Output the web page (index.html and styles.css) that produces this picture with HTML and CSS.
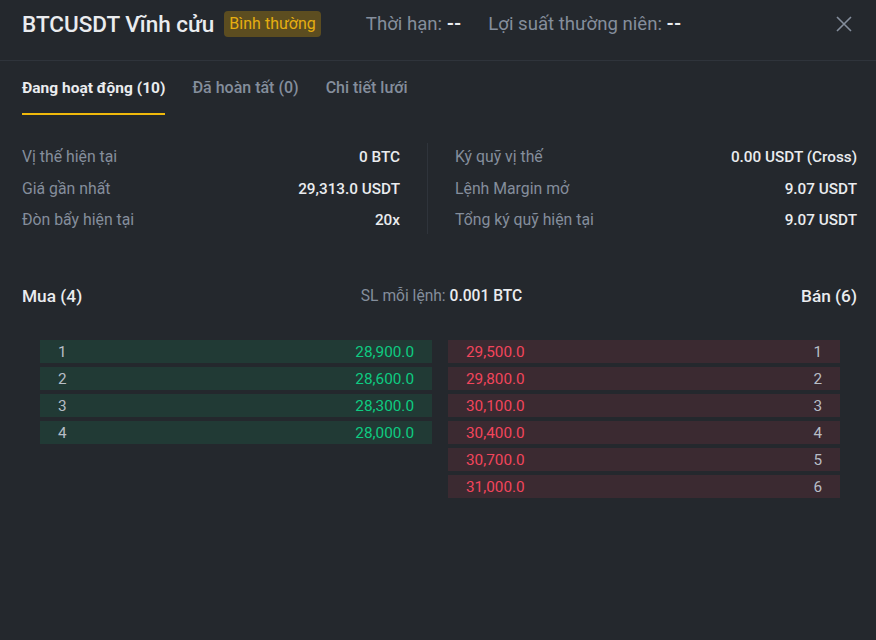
FILE: index.html
```html
<!DOCTYPE html>
<html lang="vi">
<head>
<meta charset="utf-8">
<link rel="stylesheet" href="styles.css">
</head>
<body>
<div class="modal">
  <header class="head">
    <h1 class="title">BTCUSDT Vĩnh cửu</h1>
    <span class="badge">Bình thường</span>
    <span class="meta">Thời hạn: <b>--</b></span>
    <span class="meta">Lợi suất thường niên: <b>--</b></span>
    <svg class="close" width="16" height="16" viewBox="0 0 16 16"><path d="M1 1L15 15M15 1L1 15" stroke="#848e9c" stroke-width="1.6" fill="none"/></svg>
  </header>
  <nav class="tabs">
    <span class="tab active">Đang hoạt động (10)</span>
    <span class="tab">Đã hoàn tất (0)</span>
    <span class="tab">Chi tiết lưới</span>
  </nav>
  <section class="info">
    <div class="col left">
      <div class="row"><span class="lbl">Vị thế hiện tại</span><span class="val">0 BTC</span></div>
      <div class="row"><span class="lbl">Giá gần nhất</span><span class="val">29,313.0 USDT</span></div>
      <div class="row"><span class="lbl">Đòn bẩy hiện tại</span><span class="val">20x</span></div>
    </div>
    <div class="sep"></div>
    <div class="col">
      <div class="row"><span class="lbl">Ký quỹ vị thế</span><span class="val">0.00 USDT (Cross)</span></div>
      <div class="row"><span class="lbl">Lệnh Margin mở</span><span class="val">9.07 USDT</span></div>
      <div class="row"><span class="lbl">Tổng ký quỹ hiện tại</span><span class="val">9.07 USDT</span></div>
    </div>
  </section>
  <section class="book-head">
    <span class="side">Mua (4)</span>
    <span class="qty">SL mỗi lệnh: <b>0.001 BTC</b></span>
    <span class="side">Bán (6)</span>
  </section>
  <section class="book">
    <div class="list">
      <div class="lvl buy"><span class="n">1</span><span class="p">28,900.0</span></div>
      <div class="lvl buy"><span class="n">2</span><span class="p">28,600.0</span></div>
      <div class="lvl buy"><span class="n">3</span><span class="p">28,300.0</span></div>
      <div class="lvl buy"><span class="n">4</span><span class="p">28,000.0</span></div>
    </div>
    <div class="list">
      <div class="lvl sell"><span class="p">29,500.0</span><span class="n">1</span></div>
      <div class="lvl sell"><span class="p">29,800.0</span><span class="n">2</span></div>
      <div class="lvl sell"><span class="p">30,100.0</span><span class="n">3</span></div>
      <div class="lvl sell"><span class="p">30,400.0</span><span class="n">4</span></div>
      <div class="lvl sell"><span class="p">30,700.0</span><span class="n">5</span></div>
      <div class="lvl sell"><span class="p">31,000.0</span><span class="n">6</span></div>
    </div>
  </section>
</div>
</body>
</html>
```
FILE: styles.css
```css
* { box-sizing: border-box; }
html, body { margin: 0; padding: 0; background: #24282d; }
body { font-family: Roboto, "Noto Sans", sans-serif; color: #eaecef; width: 876px; height: 640px; overflow: hidden; }
.modal { width: 876px; height: 640px; background: #24282d; }
.head { height: 61px; display: flex; align-items: center; padding: 0 24px 12px 22px; border-bottom: 1px solid #2f343b; }
.title { margin: 0; font-size: 22.5px; font-weight: 500; color: #eaecef; line-height: 30px; }
.badge { margin-left: 10px; background: #5c4d20; color: #e6ae10; font-size: 16px; padding: 0 5px; height: 26px; line-height: 26px; border-radius: 4px; }
.meta { font-size: 18.6px; color: #848e9c; margin-left: 45px; }
.meta + .meta { margin-left: 27px; }
.meta b { color: #eaecef; font-weight: 700; }
.close { margin-left: auto; }
.tabs { display: flex; gap: 27px; padding: 0 22px; height: 54px; }
.tab { font-size: 16px; line-height: 20px; color: #848e9c; font-weight: 500; padding-top: 17px; height: 54px; }
.tab.active { color: #eaecef; font-weight: 700; font-size: 15.5px; border-bottom: 2px solid #f0b90b; }
.info { display: flex; padding: 28px 19px 0 22px; }
.col { flex: 1; display: flex; flex-direction: column; gap: 11.5px; padding: 4px 0; }
.col.left { flex: 0 0 378px; }
.sep { width: 1px; background: #2f343b; margin: 0 27px; }
.row { display: flex; justify-content: space-between; font-size: 15.8px; line-height: 20px; }
.lbl { color: #848e9c; }
.val { color: #eaecef; font-weight: 500; font-size: 15.3px; }
.book-head { display: flex; justify-content: space-between; align-items: center; padding: 51px 19px 0 22px; line-height: 22px; }
.side { font-size: 17.3px; color: #eaecef; font-weight: 500; }
.qty { font-size: 15.6px; color: #848e9c; }
.qty b { color: #eaecef; font-weight: 500; }
.book { display: flex; gap: 16px; padding: 33px 36px 0 40px; }
.list { flex: 1; display: flex; flex-direction: column; gap: 4px; }
.lvl { height: 23px; display: flex; justify-content: space-between; align-items: center; padding: 0 18px; font-size: 15.3px; }
.lvl.buy { background: #213a35; }
.lvl.sell { background: #3b2a31; }
.n { color: #b7bdc6; }
.buy .p { color: #0ecb81; }
.sell .p { color: #f2455c; }
```
